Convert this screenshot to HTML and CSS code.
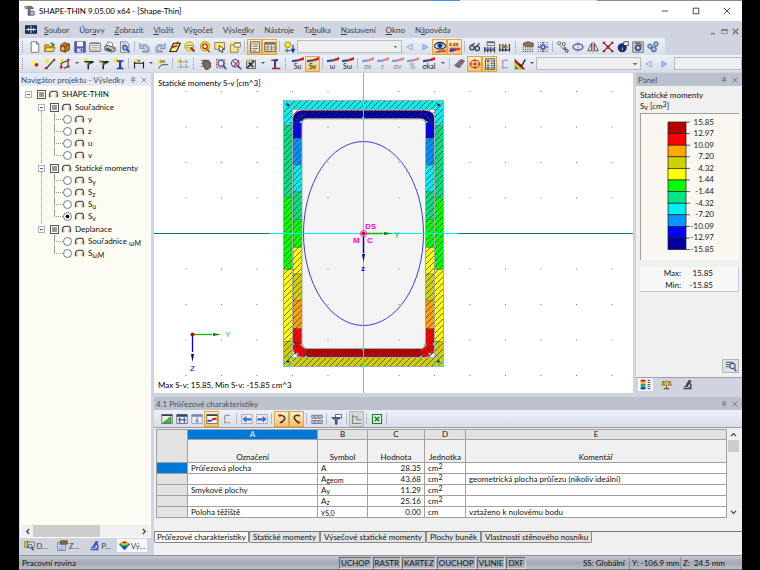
FILE: index.html
```html
<!DOCTYPE html>
<html lang="cs">
<head>
  <meta charset="UTF-8">
  <title>SHAPE-THIN 9.05.00 x64 - [Shape-Thin]</title>
  <meta name="viewport" content="width=device-width, initial-scale=1.0">
  <link rel="stylesheet" href="styles.css">
</head>

<body>
  <!-- Icon set -->
  <svg class="sprite" xmlns="http://www.w3.org/2000/svg">
    <symbol id="new" viewBox="0 0 16 16"><path d="M3 1h7l3 3v11H3z" fill="#fff" stroke="#555"/><path d="M10 1v3h3" fill="none" stroke="#555"/></symbol>
    <symbol id="open" viewBox="0 0 16 16"><path d="M1 5h5l1 2h6v7H1z" fill="#d9a520" stroke="#8a6a10"/><path d="M3 9h12l-3 5H1z" fill="#ffdf6a" stroke="#8a6a10"/><path d="M8 3c2-2 4-1 5 1l1-1v4h-4l1-1c-1-2-2-2-3-3" fill="#3a8a3a"/></symbol>
    <symbol id="box" viewBox="0 0 16 16"><path d="M2 6l5-4 7 2v8l-6 3-6-2z" fill="#b5752a" stroke="#5e3a10"/><path d="M2 6l6 2 6-4M8 8v7" fill="none" stroke="#5e3a10"/><circle cx="5" cy="10" r="2" fill="#f3c34a"/></symbol>
    <symbol id="save" viewBox="0 0 16 16"><path d="M1 1h14v14H1z" fill="#5b62b5" stroke="#34397d"/><path d="M4 1h8v6H4z" fill="#fff"/><path d="M4 10h8v5H4z" fill="#cfd4ec"/><path d="M9 11h2v3H9z" fill="#34397d"/></symbol>
    <symbol id="sheet" viewBox="0 0 16 16"><path d="M1 3h14v11H1z" fill="#f5f1e2" stroke="#555"/><path d="M3 6h10M3 9h10M3 12h10" stroke="#888"/><path d="M2 2h12v2H2z" fill="#777"/></symbol>
    <symbol id="print" viewBox="0 0 16 16"><path d="M5 1l7 2-1 5-8-2z" fill="#fff" stroke="#666"/><path d="M1 7l5-1 9 3v4l-5 2-9-3z" fill="#b9bec8" stroke="#444"/><path d="M3 10l7 3" stroke="#333" stroke-width="2"/><circle cx="13" cy="10" r="1" fill="#2a8a2a"/></symbol>
    <symbol id="preview" viewBox="0 0 16 16"><path d="M2 1h8l3 3v11H2z" fill="#e8eef8" stroke="#667"/><path d="M4 4h5M4 6h6" stroke="#889"/><circle cx="8" cy="9" r="3" fill="#9cc2ee" stroke="#234b86" stroke-width="1.5"/><path d="M10 11l4 4" stroke="#234b86" stroke-width="2"/></symbol>
    <symbol id="undo" viewBox="0 0 16 16"><path d="M1 3v7h7L5 7.500c4-2 7 0 6 5.500H5v2h8c3-8-4-13-10-9z" fill="#b4cbea" stroke="#6f7f9a"/></symbol>
    <symbol id="redo" viewBox="0 0 16 16"><path d="M15 3v7H8l3-2.500c-4-2-7 0-6 5.500h6v2H3c-3-8 4-13 10-9z" fill="#b4cbea" stroke="#6f7f9a"/></symbol>
    <symbol id="rhomb" viewBox="0 0 16 16"><path d="M6 3h9l-5 11H1z" fill="#ffef6a" stroke="#222" stroke-width="1.5"/><path d="M10 3l3-2M3 9l8-3" stroke="#b02020" stroke-width="2"/></symbol>
    <symbol id="brush" viewBox="0 0 16 16"><circle cx="7" cy="7" r="6" fill="#ffe95a" stroke="#a98d10"/><path d="M4 6h7v3H4z" fill="#fff" stroke="#777"/><path d="M9 9l5 5" stroke="#a02818" stroke-width="2.5"/></symbol>
    <symbol id="target" viewBox="0 0 16 16"><circle cx="8" cy="7" r="6" fill="#ffe11e" stroke="#9a7b00"/><circle cx="8" cy="7" r="3" fill="#fff" stroke="#b11" stroke-width="1.5"/><path d="M10 10l4 5" stroke="#9a5a18" stroke-width="2"/></symbol>
    <symbol id="pick" viewBox="0 0 16 16"><path d="M1 2h13v9H1z" fill="#ffe95a" stroke="#666"/><path d="M7 6l7 5-3 0 1 4-2 0-1-3-2 2z" fill="#fff" stroke="#222"/></symbol>
    <symbol id="folder" viewBox="0 0 16 16"><path d="M2 5h10v10H2z" fill="#ffe68a" stroke="#7a6420"/><path d="M7 2h8v6H7z" fill="#fff" stroke="#555"/><path d="M7 2h8v2H7z" fill="#c9a22a"/><path d="M1 3l2-2 2 2-2 2z" fill="#ffe11e"/></symbol>
    <symbol id="list" viewBox="0 0 16 16"><path d="M2 1h12v14H2z" fill="#f4ecd8" stroke="#444"/><path d="M5 4h7M5 7h7M5 10h7M5 13h5" stroke="#555"/><path d="M3 4h1M3 7h1M3 10h1M3 13h1" stroke="#a33"/></symbol>
    <symbol id="table" viewBox="0 0 16 16"><path d="M1 2h14v12H1z" fill="#f4ecd8" stroke="#444"/><path d="M1 2h14v3H1z" fill="#777"/><path d="M5 5v9M10 5v9M1 8h14M1 11h14" stroke="#777"/></symbol>
    <symbol id="load" viewBox="0 0 16 16"><circle cx="5" cy="5" r="4" fill="#f5e63a" stroke="#8a8010"/><path d="M1 13h8M4 10v5" stroke="#2a7a3a" stroke-width="1.5"/><path d="M12 5v8M10 11l2 4 2-4z" stroke="#1a3a9a" fill="#1a3a9a" stroke-width="1.5"/></symbol>
    <symbol id="prev" viewBox="0 0 16 16"><path d="M11 4v8L4 8z" fill="#d4e2fa" stroke="#7f9ad2"/></symbol>
    <symbol id="next" viewBox="0 0 16 16"><path d="M5 4v8l7-4z" fill="#a9c0ee" stroke="#7f9ad2"/></symbol>
    <symbol id="eye" viewBox="0 0 16 16"><path d="M0 7c4-7 12-7 16 0-4 5-12 5-16 0" fill="#e6f2ff" stroke="#1c2b66" stroke-width="1.5"/><circle cx="8" cy="6" r="3.5" fill="#2458b8"/><circle cx="8" cy="6" r="1.5" fill="#111"/><path d="M1 15l14-4v4z" fill="#e04020"/><path d="M1 15l7-2v2z" fill="#2040e0"/></symbol>
    <symbol id="values" viewBox="0 0 16 16"><text x="0" y="7" font-size="7" font-weight="bold" fill="#5a2a00">x.xx</text><path d="M1 14V9l14 0v3z" fill="#e04020"/><path d="M1 15v-4l8 0v2z" fill="#2040e0"/></symbol>
    <symbol id="glasses" viewBox="0 0 16 16"><path d="M2 6l6-3M9 8l5-5" stroke="#445" stroke-width="1.5"/><circle cx="4" cy="9" r="3" fill="#b9cbe8" stroke="#334" stroke-width="1.5"/><circle cx="11" cy="10" r="3" fill="#b9cbe8" stroke="#334" stroke-width="1.5"/></symbol>
    <symbol id="ruler" viewBox="0 0 16 16"><path d="M4 1h10v5H4z" fill="#f3f3f3" stroke="#555"/><path d="M4 1h10v2H4z" fill="#666"/><path d="M1 8v7M5 8v7M9 8v7M14 8v7M1 12h13" stroke="#223" stroke-width="1.5"/><path d="M2 9h12v2H2z" fill="#6b86b8"/></symbol>
    <symbol id="ruler2" viewBox="0 0 16 16"><path d="M1 4v10M5 4v10M9 4v10M14 4v10M1 12h13" stroke="#223" stroke-width="1.5"/><path d="M1 6h13v3H1z" fill="#d9b22a"/><path d="M5 6h5v3H5z" fill="#3a6ac0"/></symbol>
    <symbol id="gridhand" viewBox="0 0 16 16"><path d="M1 8h14M1 11h14M1 14h14" stroke="#333" stroke-width="1.5" stroke-dasharray="1.5 1.5"/><path d="M2 3l6-2 7 2v4H8L2 6z" fill="#9a7458" stroke="#4d3524"/></symbol>
    <symbol id="gridsnap" viewBox="0 0 16 16"><path d="M1 2h14M1 5h14M1 8h14M1 11h14M1 14h14" stroke="#555" stroke-dasharray="1.5 1.5"/><path d="M8 1v14M1 8h14M5 5l6 6M11 5l-6 6" stroke="#2038c0" stroke-width="1.3"/><circle cx="8" cy="8" r="2" fill="#fff" stroke="#2038c0"/></symbol>
    <symbol id="link" viewBox="0 0 16 16"><circle cx="3" cy="3" r="2" fill="#fff" stroke="#333"/><circle cx="9" cy="4" r="2" fill="#fff" stroke="#333"/><circle cx="13" cy="13" r="2" fill="#b9bec8" stroke="#333"/><path d="M4 6l5 5M9 7l3 4M8 11h3V8" stroke="#333" fill="none"/></symbol>
    <symbol id="rotate" viewBox="0 0 16 16"><ellipse cx="8" cy="8" rx="6.5" ry="4" fill="none" stroke="#4a70b8" stroke-width="2"/><path d="M8 1v14" stroke="#c24a4a" stroke-dasharray="2 1"/></symbol>
    <symbol id="mirror" viewBox="0 0 16 16"><path d="M6 3v10H1zM10 3v10h5z" fill="#e8ebf2" stroke="#333"/><path d="M8 1v14" stroke="#c22"/></symbol>
    <symbol id="cross" viewBox="0 0 16 16"><path d="M2 2l12 12M14 2L2 14" stroke="#444" stroke-width="1.5"/><path d="M1 1h3v3H1zM12 1h3v3h-3zM1 12h3v3H1zM12 12h3v3h-3zM6 6h4v4H6z" fill="#d01818"/></symbol>
    <symbol id="info" viewBox="0 0 16 16"><circle cx="7" cy="9" r="6" fill="#1c2a6e"/><path d="M6 8h2v5H6zM9 1h6v5H9z" fill="#fff" stroke="#223"/></symbol>
    <symbol id="photo" viewBox="0 0 16 16"><path d="M1 1h14v14H1z" fill="#cdd3de" stroke="#555"/><circle cx="8" cy="9" r="4" fill="#4a7ac0" stroke="#223"/><path d="M4 3h6l3 3" stroke="#a0522d" stroke-width="2" fill="none"/><circle cx="8" cy="9" r="1.5" fill="#fff"/></symbol>
    <symbol id="gears" viewBox="0 0 16 16"><g fill="#7f9fd0" stroke="#385688"><circle cx="4" cy="7" r="3"/><circle cx="12" cy="4" r="3"/><circle cx="9" cy="11" r="3.5"/></g><g fill="#fff"><circle cx="4" cy="7" r="1"/><circle cx="12" cy="4" r="1"/><circle cx="9" cy="11" r="1"/></g></symbol>
    <symbol id="node" viewBox="0 0 16 16"><circle cx="6" cy="6" r="3.5" fill="#fff27a"/><circle cx="10" cy="9" r="2.5" fill="#d22020"/></symbol>
    <symbol id="line" viewBox="0 0 16 16"><circle cx="4" cy="4" r="3" fill="#f5e63a"/><path d="M3 14L13 3" stroke="#333" stroke-width="1.5"/><path d="M1 12h4v3H1zM12 1h3v3h-3z" fill="#d22020"/></symbol>
    <symbol id="poly" viewBox="0 0 16 16"><circle cx="4" cy="4" r="3" fill="#f5e63a"/><path d="M3 13V7l9-4v8l-5 3" fill="none" stroke="#333" stroke-width="1.5"/><path d="M1 11h4v3H1zM11 1h3v3h-3zM11 10h3v3h-3z" fill="#d22020"/></symbol>
    <symbol id="elem" viewBox="0 0 16 16"><circle cx="4" cy="3" r="3" fill="#f5e63a"/><path d="M2 5h12l-7 3v7" fill="none" stroke="#222" stroke-width="2"/><path d="M7 6l4 1-4 3z" fill="#2b7a3a"/></symbol>
    <symbol id="elem2" viewBox="0 0 16 16"><path d="M2 5h12l-7 3v7" fill="none" stroke="#222" stroke-width="2"/><path d="M7 7l5-1-5 5z" fill="#2b7a3a"/><circle cx="3" cy="4" r="2" fill="#f5a53a"/></symbol>
    <symbol id="ibeam" viewBox="0 0 16 16"><circle cx="4" cy="3" r="3" fill="#f5e63a"/><path d="M5 4h9M5 14h9" stroke="#1c3a9a" stroke-width="2"/><path d="M9.5 4v10" stroke="#1c3a9a" stroke-width="3"/></symbol>
    <symbol id="ibeam2" viewBox="0 0 16 16"><path d="M3 3h9M4 14h11" stroke="#c22020" stroke-width="2"/><path d="M12 3H8v11" stroke="#1c3a9a" stroke-width="2.5" fill="none"/></symbol>
    <symbol id="dim" viewBox="0 0 16 16"><circle cx="5" cy="4" r="3" fill="#f5e63a"/><path d="M2 5v9M14 5v9M2 7h12" stroke="#222" stroke-width="1.5"/><path d="M6 2l4 4M10 2L6 6" stroke="#555"/></symbol>
    <symbol id="xxx" viewBox="0 0 16 16"><circle cx="4" cy="5" r="3" fill="#f5e63a"/><text x="4" y="7" font-size="7" fill="#333">xx</text><path d="M2 14l4-5h9" stroke="#444" fill="none" stroke-width="1.3"/></symbol>
    <symbol id="axes" viewBox="0 0 16 16"><circle cx="4" cy="4" r="3" fill="#f5e63a"/><path d="M5 2v12M12 2v12M1 5h14M1 12h14" stroke="#667" stroke-dasharray="2 1"/></symbol>
    <symbol id="hand" viewBox="0 0 16 16"><path d="M1 3h12M1 7h4M1 11h4" stroke="#555"/><path d="M4 4l4-1 6 3v6l-3 3H7L4 9z" fill="#7c6b5c" stroke="#332a22"/></symbol>
    <symbol id="zoom" viewBox="0 0 16 16"><path d="M2 2h11v11H2z" fill="none" stroke="#c22" stroke-dasharray="2 1"/><circle cx="8" cy="7" r="4" fill="#e0ecfa" stroke="#34508c" stroke-width="1.5"/><path d="M11 10l4 5" stroke="#34508c" stroke-width="2"/></symbol>
    <symbol id="zoomx" viewBox="0 0 16 16"><circle cx="7" cy="7" r="5" fill="#e0ecfa" stroke="#34508c" stroke-width="1.5"/><path d="M10 10l5 5" stroke="#34508c" stroke-width="2"/><path d="M4 4l8 9M12 3L4 12" stroke="#d02020" stroke-width="1.5"/></symbol>
    <symbol id="view" viewBox="0 0 16 16"><path d="M2 3h12v11H2z" fill="#cfd3d9" stroke="#444"/><path d="M3 13L12 4M5 6l6 6" stroke="#222" stroke-width="2"/><path d="M2 2h5v3H2z" fill="#e5d43a"/></symbol>
    <symbol id="wedge" viewBox="0 0 16 8"><path d="M0 7V4L8 3v3z" fill="#3a4a9a"/><path d="M8 6V3l8-3v4z" fill="#d02a1c"/></symbol>
    <symbol id="plate" viewBox="0 0 16 16"><path d="M1 10l8-8 5 2-7 9z" fill="#5a86c4" stroke="#444"/><path d="M3 12l9-9" stroke="#d04030" stroke-width="1.5"/></symbol>
    <symbol id="locate" viewBox="0 0 16 16"><ellipse cx="8" cy="8" rx="6" ry="5" fill="none" stroke="#b03010" stroke-width="1.5"/><path d="M8 1v14M0 8h16" stroke="#b03010"/><circle cx="8" cy="8" r="1.5" fill="#b03010"/></symbol>
    <symbol id="legend" viewBox="0 0 16 16"><path d="M2 1h12v14H2z" fill="#d7dbe4" stroke="#334"/><path d="M4 3h3v2H4z" fill="#c00"/><path d="M4 6h3v2H4z" fill="#e8c000"/><path d="M4 9h3v2H4z" fill="#0a0"/><path d="M4 12h3v2H4z" fill="#06c"/><path d="M9 4h4M9 7h4M9 10h4M9 13h4" stroke="#333"/></symbol>
    <symbol id="colors" viewBox="0 0 16 16"><path d="M1 1h7v3H1z" fill="#d01010"/><path d="M1 4h7v3H1z" fill="#f0c000"/><path d="M1 7h7v3H1z" fill="#00c020"/><path d="M1 10h7v2H1z" fill="#00b8e0"/><path d="M1 12h7v3H1z" fill="#1020c0"/><path d="M11 2h4M11 5h4M11 8h4M11 11h4M11 14h4" stroke="#555" stroke-width="1.5"/></symbol>
    <symbol id="bracket" viewBox="0 0 16 16"><path d="M12 3H5v10h7" fill="none" stroke="#888" stroke-width="1.5" stroke-dasharray="6 1"/></symbol>
    <symbol id="rainbow" viewBox="0 0 16 16"><path d="M1 1v14h14z" fill="#1a9a30"/><path d="M1 1l14 14H11L1 6z" fill="#d01818"/><path d="M1 6l10 9H7L1 10z" fill="#f3d21a"/><path d="M7 8l3 3 5-9" fill="none" stroke="#222" stroke-width="2"/></symbol>
    <symbol id="section" viewBox="0 0 16 12"><path d="M2 11V6Q3 2 6 2h6q2 1 2 4v5" fill="none" stroke="#555" stroke-width="2"/><path d="M4 11V7M12 11V6" stroke="#c83a3a"/></symbol>
    <symbol id="tri" viewBox="0 0 16 16"><path d="M1 2h14v12H1z" fill="#e8f2e4" stroke="#555"/><path d="M1 2h14v2H1z" fill="#345"/><path d="M3 13L13 5v8z" fill="#4ac04a" stroke="#1d7a1d"/></symbol>
    <symbol id="sort" viewBox="0 0 16 16"><path d="M1 2h14v12H1z" fill="#e8edf6" stroke="#555"/><path d="M1 2h14v3H1z" fill="#345"/><path d="M5 6v7M11 6v7M3 9h10" stroke="#2848a8" stroke-width="1.5"/></symbol>
    <symbol id="down" viewBox="0 0 16 16"><path d="M1 2h14v12H1z" fill="#e8edf6" stroke="#8a93a8"/><path d="M1 2h14v3H1z" fill="#7886a8"/><path d="M7 6h2v4h2l-3 4-3-4h2z" fill="#7c98cc"/></symbol>
    <symbol id="tablewedge" viewBox="0 0 16 16"><path d="M1 2h14v12H1z" fill="#fff" stroke="#555"/><path d="M1 2h14v2H1z" fill="#345"/><path d="M2 12V9h6v2z" fill="#2040c0"/><path d="M8 10V7l6-1v3z" fill="#d02a1c"/></symbol>
    <symbol id="left" viewBox="0 0 16 16"><path d="M1 2h14v12H1z" fill="#e8edf6" stroke="#777" stroke-dasharray="2 1"/><path d="M2 8l5-4v3h7v3H7v3z" fill="#3f6cc8"/></symbol>
    <symbol id="right" viewBox="0 0 16 16"><path d="M1 2h14v12H1z" fill="#e8edf6" stroke="#777" stroke-dasharray="2 1"/><path d="M14 8L9 4v3H2v3h7v3z" fill="#3f6cc8"/></symbol>
    <symbol id="turnr" viewBox="0 0 16 16"><path d="M5 3c6 0 8 3 6 6s-4 4-6 4" fill="none" stroke="#433" stroke-width="2"/><path d="M6 1v5L2 3z" fill="#c22"/></symbol>
    <symbol id="turnl" viewBox="0 0 16 16"><path d="M12 4C6 1 3 5 5 8s3 4 5 5" fill="none" stroke="#433" stroke-width="2"/><path d="M9 15v-5l4 3z" fill="#c22"/></symbol>
    <symbol id="rows" viewBox="0 0 16 16"><path d="M1 3h14v4H1zM1 10h14v4H1z" fill="#b9bfe0" stroke="#667"/><path d="M5 3v4M10 3v4M5 10v4M10 10v4" stroke="#667"/></symbol>
    <symbol id="filter" viewBox="0 0 16 16"><path d="M6 2h8v5H6z" fill="#fff" stroke="#345"/><path d="M1 6h11L8 10v5H6v-5z" fill="#4a72b8" stroke="#234"/></symbol>
    <symbol id="chart" viewBox="0 0 16 16"><path d="M2 2v12h12M2 5h6v4h6" fill="none" stroke="#888" stroke-width="1.5"/></symbol>
    <symbol id="excel" viewBox="0 0 16 16"><path d="M2 2h12v12H2z" fill="#e2f3e2" stroke="#1d7a2d" stroke-width="1.5"/><path d="M5 5l6 6M11 5l-6 6" stroke="#1d7a2d" stroke-width="2"/></symbol>
    <symbol id="data" viewBox="0 0 16 16"><path d="M1 2h6v9H1z" fill="#f0c030" stroke="#86661a"/><path d="M5 3h10v8H5z" fill="#dde7f6" stroke="#446"/><circle cx="9" cy="9" r="3" fill="#a8ccf2" stroke="#245"/><path d="M11 11l3 4" stroke="#245" stroke-width="2"/></symbol>
    <symbol id="display" viewBox="0 0 16 16"><path d="M1 4h11v11H1z" fill="#eef2fa" stroke="#3a4a78"/><path d="M3 7h7M3 10h7M3 13h7" stroke="#3a5ab0"/><path d="M5 1h10v5H5z" fill="#8c6a4c" stroke="#443"/></symbol>
    <symbol id="scope" viewBox="0 0 16 16"><path d="M10 1l4 2-6 8-3-2z" fill="#444"/><path d="M11 6c4 3 2 7-1 7M2 14h12M3 11h6" stroke="#444" stroke-width="2" fill="none"/></symbol>
    <symbol id="scopeblue" viewBox="0 0 16 16"><path d="M10 1l4 2-6 8-3-2z" fill="#3a58c8"/><path d="M11 6c4 3 2 7-1 7M2 14h12M3 11h6" stroke="#3a58c8" stroke-width="2" fill="none"/></symbol>
    <symbol id="result" viewBox="0 0 16 16"><path d="M0 6q8-7 16 0l-8 9z" fill="#1a40d0"/><path d="M1 5q7-6 14 0l-3 4H4z" fill="#20c040"/><path d="M2 4q6-4 12 0l-3 3H5z" fill="#f0e020"/><path d="M4 3q4-2 8 0l-2 2H6z" fill="#e02020"/></symbol>
    <symbol id="scales" viewBox="0 0 16 16"><path d="M8 2v11M4 14h8M2 4h12" stroke="#6a5a20" stroke-width="1.5"/><path d="M1 9l2-5 3 5zM10 9l3-5 2 5z" fill="#e2c040" stroke="#6a5a20"/><ellipse cx="8" cy="6" rx="3" ry="3" fill="#d8b83a"/></symbol>
    <symbol id="search" viewBox="0 0 16 16"><path d="M1 3h10M1 6h6M1 9h5" stroke="#556" stroke-width="1.5"/><circle cx="10" cy="8" r="3.5" fill="#dce6f5" stroke="#445a90" stroke-width="1.5"/><path d="M12 11l3 4" stroke="#445a90" stroke-width="2"/></symbol>
    <symbol id="pin" viewBox="0 0 10 10"><path d="M3 1h4v5M3 1v5M6 1v5M1 6h8M5 6v4" fill="none" stroke="#667"/></symbol>
    <symbol id="close" viewBox="0 0 10 10"><path d="M1 1l8 8M9 1L1 9" stroke="#556"/></symbol>
  </svg>

  <div class="app">
    <header class="titlebar">
      <svg class="logo" viewBox="0 0 16 16"><path d="M1 2h10l3 3H9v10H6V5H2z" fill="#6f7a8c" stroke="#39424f"/><circle cx="12" cy="12" r="3.5" fill="#a7b7d6" stroke="#445"/><path d="M1 1l4 1-2 4z" fill="#e0b030"/></svg>
      <h1>SHAPE-THIN 9.05.00 x64 - [Shape-Thin]</h1>
      <div class="window-buttons">
        <button aria-label="Minimalizovat"><svg viewBox="0 0 10 10"><path d="M1 5h8" stroke="#222"/></svg></button>
        <button aria-label="Maximalizovat"><svg viewBox="0 0 10 10"><path d="M1.5 1.5h7v7h-7z" fill="none" stroke="#222"/></svg></button>
        <button aria-label="Zavřít"><svg viewBox="0 0 10 10"><path d="M1 1l8 8M9 1L1 9" stroke="#222"/></svg></button>
      </div>
    </header>

    <nav class="menubar">
      <svg class="menu-logo" viewBox="0 0 14 10"><path d="M0 0h14v10H0z" fill="#1e2a5c"/><path d="M1 5h12M7 1v8M4 3v4M10 3v4" stroke="#fff"/></svg>
      <a href="#"><u>S</u>oubor</a>
      <a href="#">Úpr<u>a</u>vy</a>
      <a href="#"><u>Z</u>obrazit</a>
      <a href="#"><u>V</u>ložit</a>
      <a href="#">Vý<u>p</u>očet</a>
      <a href="#">Výsle<u>d</u>ky</a>
      <a href="#">Nástro<u>j</u>e</a>
      <a href="#">Ta<u>b</u>ulka</a>
      <a href="#"><u>N</u>astavení</a>
      <a href="#"><u>O</u>kno</a>
      <a href="#">N<u>á</u>pověda</a>
      <div class="mdi-buttons">
        <button aria-label="Minimalizovat okno"><svg viewBox="0 0 10 10"><path d="M1 8h6" stroke="#777" stroke-width="2"/></svg></button>
        <button aria-label="Obnovit okno"><svg viewBox="0 0 10 10"><path d="M1 2h8v6H1z" fill="none" stroke="#777"/><path d="M1 3h8" stroke="#777" stroke-width="2"/></svg></button>
        <button aria-label="Zavřít okno"><svg viewBox="0 0 10 10"><path d="M1 1l8 8M9 1L1 9" stroke="#777" stroke-width="2"/></svg></button>
      </div>
    </nav>

    <div class="toolbars">
      <div class="toolbar short">
        <i class="grip"></i>
        <button class="tool"><svg><use href="#new"/></svg></button>
        <button class="tool"><svg><use href="#open"/></svg></button>
        <button class="tool"><svg><use href="#box"/></svg></button>
        <button class="tool"><svg><use href="#save"/></svg></button>
        <button class="tool"><svg><use href="#sheet"/></svg></button>
        <button class="tool"><svg><use href="#print"/></svg></button>
        <button class="tool"><svg><use href="#preview"/></svg></button>
        <i class="sep"></i>
        <button class="tool"><svg><use href="#undo"/></svg></button>
        <button class="tool"><svg><use href="#redo"/></svg></button>
        <button class="tool"><svg><use href="#rhomb"/></svg></button>
        <button class="tool"><svg><use href="#brush"/></svg></button>
        <button class="tool"><svg><use href="#target"/></svg></button>
        <button class="tool"><svg><use href="#pick"/></svg></button>
        <button class="tool"><svg><use href="#folder"/></svg></button>
        <i class="sep"></i>
        <button class="tool on"><svg><use href="#list"/></svg></button>
        <button class="tool on"><svg><use href="#table"/></svg></button>
        <i class="sep"></i>
        <button class="tool"><svg><use href="#load"/></svg></button>
        <select class="combo" aria-label="Zatěžovací stav"><option></option></select>
        <button class="tool"><svg><use href="#prev"/></svg></button>
        <button class="tool"><svg><use href="#next"/></svg></button>
        <button class="tool on"><svg><use href="#eye"/></svg></button>
        <button class="tool on"><svg><use href="#values"/></svg></button>
        <i class="sep"></i>
        <button class="tool"><svg><use href="#glasses"/></svg></button>
        <button class="tool"><svg><use href="#ruler"/></svg></button>
        <button class="tool"><svg><use href="#ruler2"/></svg></button>
        <i class="grip"></i>
        <button class="tool"><svg><use href="#gridhand"/></svg></button>
        <button class="tool"><svg><use href="#gridsnap"/></svg></button>
        <i class="sep"></i>
        <button class="tool"><svg><use href="#link"/></svg></button>
        <button class="tool"><svg><use href="#rotate"/></svg></button>
        <button class="tool"><svg><use href="#mirror"/></svg></button>
        <button class="tool"><svg><use href="#cross"/></svg></button>
        <button class="tool"><svg><use href="#info"/></svg></button>
        <button class="tool"><svg><use href="#photo"/></svg></button>
        <button class="tool"><svg><use href="#gears"/></svg></button>
      </div>

      <div class="toolbar">
        <i class="grip"></i>
        <button class="tool"><svg><use href="#node"/></svg></button>
        <button class="tool"><svg><use href="#line"/></svg></button>
        <button class="tool"><svg><use href="#poly"/></svg></button>
        <button class="drop" aria-label="Další linie"></button>
        <button class="tool"><svg><use href="#elem"/></svg></button>
        <button class="tool"><svg><use href="#elem2"/></svg></button>
        <button class="tool"><svg><use href="#ibeam"/></svg></button>
        <i class="sep"></i>
        <button class="tool"><svg><use href="#dim"/></svg></button>
        <button class="drop" aria-label="Další kóty"></button>
        <button class="tool"><svg><use href="#xxx"/></svg></button>
        <i class="sep"></i>
        <button class="tool"><svg><use href="#axes"/></svg></button>
        <i class="grip"></i>
        <button class="tool"><svg><use href="#hand"/></svg></button>
        <button class="tool"><svg><use href="#zoom"/></svg></button>
        <button class="tool"><svg><use href="#zoomx"/></svg></button>
        <button class="tool"><svg><use href="#view"/></svg></button>
        <button class="drop" aria-label="Další pohledy"></button>
        <button class="tool"><svg><use href="#ibeam2"/></svg></button>
        <i class="grip"></i>
        <button class="tool value"><svg><use href="#wedge"/></svg>Su</button>
        <button class="tool value on"><svg><use href="#wedge"/></svg>Sv</button>
        <i class="sep"></i>
        <button class="tool value"><svg><use href="#wedge"/></svg>ω</button>
        <button class="tool value"><svg><use href="#wedge"/></svg>Sω</button>
        <i class="sep"></i>
        <button class="tool value" disabled><svg><use href="#wedge"/></svg>σx</button>
        <button class="tool value" disabled><svg><use href="#wedge"/></svg>τ</button>
        <button class="tool value" disabled><svg><use href="#wedge"/></svg>σv</button>
        <button class="tool value" disabled><svg><use href="#wedge"/></svg>%</button>
        <button class="tool value wide"><svg><use href="#wedge"/></svg>σkal</button>
        <button class="drop" aria-label="Další napětí"></button>
        <i class="sep"></i>
        <button class="tool"><svg><use href="#plate"/></svg></button>
        <button class="tool on"><svg><use href="#locate"/></svg></button>
        <button class="tool on"><svg><use href="#legend"/></svg></button>
        <button class="tool"><svg><use href="#bracket"/></svg></button>
        <button class="tool"><svg><use href="#rainbow"/></svg></button>
        <button class="drop" aria-label="Další barvy"></button>
        <select class="combo" aria-label="Viditelnost"><option></option></select>
        <button class="tool"><svg><use href="#prev"/></svg></button>
        <button class="tool"><svg><use href="#next"/></svg></button>
        <select class="combo last" aria-label="Řez"><option></option></select>
      </div>
    </div>

    <main class="workspace">
      <!-- Project navigator -->
      <aside class="navigator">
        <div class="pane-head light">
          <h2>Navigátor projektu - Výsledky</h2>
          <button><svg><use href="#pin"/></svg></button>
          <button><svg><use href="#close"/></svg></button>
        </div>
        <div class="tree-box">
          <ul class="tree">
            <li class="group">
              <label><i class="expander"></i><input type="checkbox" class="mixed"><svg><use href="#section"/></svg>SHAPE-THIN</label>
              <ul>
                <li class="group">
                  <label><i class="expander"></i><input type="checkbox" class="mixed"><svg><use href="#section"/></svg>Souřadnice</label>
                  <ul>
                    <li><label><input type="radio" name="result"><svg><use href="#section"/></svg>y</label></li>
                    <li><label><input type="radio" name="result"><svg><use href="#section"/></svg>z</label></li>
                    <li><label><input type="radio" name="result"><svg><use href="#section"/></svg>u</label></li>
                    <li><label><input type="radio" name="result"><svg><use href="#section"/></svg>v</label></li>
                  </ul>
                </li>
                <li class="group">
                  <label><i class="expander"></i><input type="checkbox" class="mixed"><svg><use href="#section"/></svg>Statické momenty</label>
                  <ul>
                    <li><label><input type="radio" name="result"><svg><use href="#section"/></svg>S<sub>y</sub></label></li>
                    <li><label><input type="radio" name="result"><svg><use href="#section"/></svg>S<sub>z</sub></label></li>
                    <li><label><input type="radio" name="result"><svg><use href="#section"/></svg>S<sub>u</sub></label></li>
                    <li><label><input type="radio" name="result" checked><svg><use href="#section"/></svg>S<sub>v</sub></label></li>
                  </ul>
                </li>
                <li class="group">
                  <label><i class="expander"></i><input type="checkbox" class="mixed"><svg><use href="#section"/></svg>Deplanace</label>
                  <ul>
                    <li><label><input type="radio" name="result"><svg><use href="#section"/></svg>Souřadnice <sub>ωM</sub></label></li>
                    <li><label><input type="radio" name="result"><svg><use href="#section"/></svg>S<sub>ωM</sub></label></li>
                  </ul>
                </li>
              </ul>
            </li>
          </ul>
          <div class="hscroll">
            <button aria-label="Vlevo"><svg viewBox="0 0 6 8"><path d="M5 1L2 4l3 3" fill="none" stroke="#444" stroke-width="1.5"/></svg></button>
            <div class="track"><div class="thumb"></div></div>
            <button aria-label="Vpravo"><svg viewBox="0 0 6 8"><path d="M1 1l3 3-3 3" fill="none" stroke="#444" stroke-width="1.5"/></svg></button>
          </div>
        </div>
        <div class="nav-tabs">
          <button><svg><use href="#data"/></svg>D...</button>
          <button><svg><use href="#display"/></svg>Z...</button>
          <button><svg><use href="#scopeblue"/></svg>P...</button>
          <button class="active"><svg><use href="#result"/></svg>Vý...</button>
        </div>
      </aside>

      <div class="right">
        <div class="upper">
          <!-- Cross-section drawing -->
          <div class="canvas">
            <svg viewBox="154 73 479 320" preserveAspectRatio="xMidYMid meet">
              <defs>
                <pattern id="dots" x="292" y="91" width="35.5" height="35.5" patternUnits="userSpaceOnUse"><path d="M0 0h1v1H0z" fill="#777"/></pattern>
                <pattern id="hatch" width="6" height="6" patternUnits="userSpaceOnUse"><path d="M-1 7L7-1" stroke="#303030" stroke-width=".7"/></pattern>
              </defs>
              <path d="M283 100h160v266H283z" fill="#fff"/>
              <!-- outer walls -->
              <g stroke="#7a5a4a" stroke-width=".5">
                <path d="M283.5 100.5h160v25h-9V109.5h-142v16h-9z" fill="#00f0f0"/>
                <path d="M283.5 125.5h9v72h-9zM434.5 125.5h9v72h-9z" fill="#00e080"/>
                <path d="M283.5 197.5h9v72h-9zM434.5 197.5h9v72h-9z" fill="#00ff00"/>
                <path d="M283.5 269.5h9v72h-9zM434.5 269.5h9v72h-9z" fill="#ffff00"/>
                <path d="M283.5 341.5h9v16h142v-16h9v25h-160z" fill="#d0d000"/>
                <!-- inner walls -->
                <path d="M302 110.500h122.500c7 0 10 4 10 9v3h-9c0-3-2-4-4-4H306c-3 0-4 2-4 4h-9v-3c0-5 4-9 9-9z" fill="#0000a0"/>
                <path d="M293 122h9v16.500h-9zM425.500 122h9v16.500h-9z" fill="#0000ff"/>
                <path d="M293 138.500h9V165h-9zM425.500 138.500h9V165h-9z" fill="#0090ff"/>
                <path d="M293 165h9v27h-9zM425.500 165h9v27h-9z" fill="#00f0f0"/>
                <path d="M293 192h9v27.500h-9zM425.500 192h9v27.500h-9z" fill="#00e080"/>
                <path d="M293 219.500h9v28h-9zM425.500 219.500h9v28h-9z" fill="#00ff00"/>
                <path d="M293 247.500h9V274h-9zM425.500 247.500h9V274h-9z" fill="#ffff00"/>
                <path d="M293 274h9v27h-9zM425.500 274h9v27h-9z" fill="#d0d000"/>
                <path d="M293 301h9v27.500h-9zM425.500 301h9v27.500h-9z" fill="#ffa000"/>
                <path d="M293 328.500h9V344c0 3 2 4.500 4 4.500v8.500h-3c-6 0-10-4-10-9zM434.500 328.500h-9V344c0 3-2 4.500-4 4.500v8.500h3c6 0 10-4 10-9z" fill="#ff0000"/>
                <path d="M306 348.500h115.500v8.500H306z" fill="#b80000"/>
              </g>
              <path d="M283 100h160v266H283zM306 119c-3 0-4 2-4 5v220c0 3 2 4.500 4 4.500h115.500c3 0 4-2 4-4.500V124c0-3-1-5-4-5z" fill="url(#hatch)" fill-rule="evenodd"/>
              <rect x="302" y="119" width="123.5" height="229.5" rx="5" fill="#f4f4f4" stroke="#a8a8a8"/>
              <path d="M283.5 100.5h160v266h-160zM292.5 109.5h142v248h-142z" fill="none" stroke="#a8a8a8"/>
              <path d="M154 73h479v320H154z" fill="url(#dots)"/>
              <ellipse cx="363.5" cy="233.5" rx="60" ry="92" fill="none" stroke="#3c3cf0"/>
              <path d="M154 233.500h479" stroke="#007878"/>
              <path d="M270 233.500h187M363.500 73v320" stroke="#00f0ff"/>
              <!-- corner stress points -->
              <g fill="none" stroke-width="3" stroke-dasharray="2 1.5">
                <path d="M296 124q1-9 10-10M431 124q-1-9-10-10" stroke="#0020d0"/>
                <path d="M296 342q1 9 10 11M431 342q-1 9-10 11" stroke="#c00000"/>
              </g>
              <g fill="#800000"><circle cx="288" cy="105" r="1.3"/><circle cx="438.5" cy="105" r="1.3"/><circle cx="288" cy="361.5" r="1.3"/><circle cx="438.5" cy="361.5" r="1.3"/><circle cx="297" cy="122" r="1"/><circle cx="300" cy="117" r="1"/><circle cx="306" cy="114" r="1"/><circle cx="421" cy="114" r="1"/><circle cx="427" cy="117" r="1"/><circle cx="430" cy="122" r="1"/></g>
              <g fill="#20e8f0"><circle cx="284" cy="105" r="1.3"/><circle cx="288" cy="101" r="1.3"/><circle cx="443" cy="105" r="1.3"/><circle cx="438" cy="101" r="1.3"/><circle cx="284" cy="362" r="1.3"/><circle cx="288" cy="366" r="1.3"/><circle cx="288" cy="357" r="1.3"/><circle cx="292" cy="362" r="1.3"/><circle cx="443" cy="362" r="1.3"/><circle cx="438" cy="366" r="1.3"/><circle cx="438" cy="357" r="1.3"/><circle cx="434" cy="362" r="1.3"/><circle cx="301" cy="122" r="1.3"/><circle cx="426" cy="122" r="1.3"/><circle cx="293" cy="344" r="1.3"/><circle cx="302" cy="345" r="1.3"/><circle cx="297" cy="354" r="1.3"/><circle cx="434" cy="344" r="1.3"/><circle cx="425" cy="345" r="1.3"/><circle cx="430" cy="354" r="1.3"/><circle cx="306" cy="357" r="1.3"/><circle cx="421" cy="357" r="1.3"/><circle cx="363" cy="101" r="1.3"/><circle cx="363" cy="118" r="1.3"/><circle cx="363" cy="349" r="1.3"/><circle cx="363" cy="366" r="1.3"/></g>
              <!-- centroid axes -->
              <path d="M366 233.500h17" stroke="#00c000" stroke-width="1.5"/><path d="M384 232l8 1.500-8 1.500z" fill="#008000"/>
              <path d="M363.500 236v17" stroke="#0000c0" stroke-width="1.5"/><path d="M362 254h3l-1.500 8z" fill="#000090"/>
              <circle cx="363.5" cy="233.5" r="3" fill="none" stroke="#ff00c0"/><circle cx="363.5" cy="233.5" r="1.8" fill="#d00000"/>
              <text class="axis green" x="395" y="236">y</text>
              <text class="axis blue bold" x="361" y="271">z</text>
              <text class="axis pink" x="365" y="229">DS</text>
              <text class="axis pink" x="353" y="243">M</text>
              <text class="axis pink" x="367" y="243">C</text>
              <!-- global axes -->
              <path d="M193 334.500h19" stroke="#00c000" stroke-width="1.3"/><path d="M213 333l8 1.500-8 1.500z" fill="#008000"/>
              <path d="M192.500 335v17" stroke="#0000f0" stroke-width="1.3"/><path d="M191 354h3l-1.500 8z" fill="#000090"/>
              <circle cx="192.5" cy="334.5" r="2" fill="#d00000"/>
              <text class="axis green" x="225" y="337">Y</text>
              <text class="axis blue" x="190" y="371">Z</text>
              <text class="note" x="158" y="86">Statické momenty S-v [cm^3]</text>
              <text class="note" x="158" y="388">Max S-v: 15.85, Min S-v: -15.85 cm^3</text>
            </svg>
          </div>

          <!-- Control panel -->
          <aside class="panel">
            <div class="pane-head">
              <h2>Panel</h2>
              <button><svg><use href="#pin"/></svg></button>
              <button><svg><use href="#close"/></svg></button>
            </div>
            <div class="panel-body">
              <p>Statické momenty</p>
              <p>S<sub>v</sub> [cm<sup>3</sup>]</p>
              <div class="scale">
                <svg viewBox="0 0 98 146">
                  <g stroke="#222" stroke-width=".7">
                    <rect x="27" y="8" width="18" height="11.6" fill="#b80000"/>
                    <rect x="27" y="19.6" width="18" height="11.6" fill="#ff0000"/>
                    <rect x="27" y="31.2" width="18" height="11.6" fill="#ffa800"/>
                    <rect x="27" y="42.8" width="18" height="11.6" fill="#d0d000"/>
                    <rect x="27" y="54.4" width="18" height="11.6" fill="#ffff00"/>
                    <rect x="27" y="66" width="18" height="11.6" fill="#00ff00"/>
                    <rect x="27" y="77.6" width="18" height="11.6" fill="#00e688"/>
                    <rect x="27" y="89.2" width="18" height="11.6" fill="#00f0f0"/>
                    <rect x="27" y="100.8" width="18" height="11.6" fill="#0098ff"/>
                    <rect x="27" y="112.4" width="18" height="11.6" fill="#0000ff"/>
                    <rect x="27" y="124" width="18" height="11.6" fill="#0000a0"/>
                    <path d="M45 8h4M45 19.600h4M45 31.200h4M45 42.800h4M45 54.400h4M45 66h4M45 77.600h4M45 89.200h4M45 100.800h4M45 112.400h4M45 124h4M45 135.600h4"/>
                  </g>
                  <g class="scale-values">
                    <text x="73" y="11">15.85</text>
                    <text x="73" y="22">12.97</text>
                    <text x="73" y="34">10.09</text>
                    <text x="73" y="45">7.20</text>
                    <text x="73" y="57">4.32</text>
                    <text x="73" y="68">1.44</text>
                    <text x="73" y="80">-1.44</text>
                    <text x="73" y="92">-4.32</text>
                    <text x="73" y="103">-7.20</text>
                    <text x="73" y="115">-10.09</text>
                    <text x="73" y="126">-12.97</text>
                    <text x="73" y="138">-15.85</text>
                  </g>
                </svg>
              </div>
              <dl class="extremes">
                <dt>Max:</dt><dd>15.85</dd>
                <dt>Min:</dt><dd>-15.85</dd>
              </dl>
              <button class="details"><svg><use href="#search"/></svg></button>
            </div>
            <div class="panel-tabs">
              <button class="active"><svg><use href="#colors"/></svg></button>
              <button><svg><use href="#scales"/></svg></button>
              <button><svg><use href="#scope"/></svg></button>
            </div>
          </aside>
        </div>

        <!-- Result table -->
        <section class="results">
          <div class="pane-head">
            <h2>4.1 Průřezové charakteristiky</h2>
            <button><svg><use href="#pin"/></svg></button>
            <button><svg><use href="#close"/></svg></button>
          </div>
          <div class="toolbar table-tools">
            <button class="tool"><svg><use href="#tri"/></svg></button>
            <button class="tool"><svg><use href="#sort"/></svg></button>
            <button class="tool"><svg><use href="#down"/></svg></button>
            <button class="tool on"><svg><use href="#tablewedge"/></svg></button>
            <button class="tool"><svg><use href="#bracket"/></svg></button>
            <i class="sep"></i>
            <button class="tool"><svg><use href="#left"/></svg></button>
            <button class="tool"><svg><use href="#right"/></svg></button>
            <i class="sep"></i>
            <button class="tool on"><svg><use href="#turnr"/></svg></button>
            <button class="tool on"><svg><use href="#turnl"/></svg></button>
            <i class="sep"></i>
            <button class="tool"><svg><use href="#rows"/></svg></button>
            <i class="sep"></i>
            <button class="tool"><svg><use href="#filter"/></svg></button>
            <i class="sep"></i>
            <button class="tool pressed"><svg><use href="#chart"/></svg></button>
            <i class="sep"></i>
            <button class="tool"><svg><use href="#excel"/></svg></button>
            <i class="sep"></i>
          </div>
          <div class="grid-area">
            <table>
              <colgroup><col class="c-head"><col class="c-a"><col class="c-b"><col class="c-c"><col class="c-d"><col></colgroup>
              <thead>
                <tr class="letters"><th rowspan="2"></th><th class="selected">A</th><th>B</th><th>C</th><th>D</th><th>E</th></tr>
                <tr class="names"><th>Označení</th><th>Symbol</th><th>Hodnota</th><th>Jednotka</th><th>Komentář</th></tr>
              </thead>
              <tbody>
                <tr><th class="selected"></th><td>Průřezová plocha</td><td>A</td><td class="num">28.35</td><td>cm<sup>2</sup></td><td></td></tr>
                <tr><th></th><td></td><td>A<sub>geom</sub></td><td class="num">43.68</td><td>cm<sup>2</sup></td><td>geometrická plocha průřezu (nikoliv ideální)</td></tr>
                <tr><th></th><td>Smykové plochy</td><td>A<sub>y</sub></td><td class="num">11.29</td><td>cm<sup>2</sup></td><td></td></tr>
                <tr><th></th><td></td><td>A<sub>z</sub></td><td class="num">25.16</td><td>cm<sup>2</sup></td><td></td></tr>
                <tr><th></th><td>Poloha těžiště</td><td>y<sub>S,0</sub></td><td class="num">0.00</td><td>cm</td><td>vztaženo k nulovému bodu</td></tr>
              </tbody>
            </table>
            <div class="vscroll">
              <button aria-label="Nahoru"><svg viewBox="0 0 8 6"><path d="M1 5l3-3 3 3" fill="none" stroke="#444" stroke-width="1.5"/></svg></button>
              <div class="thumb"></div>
              <button aria-label="Dolů"><svg viewBox="0 0 8 6"><path d="M1 1l3 3 3-3" fill="none" stroke="#444" stroke-width="1.5"/></svg></button>
            </div>
          </div>
          <div class="sheet-tabs">
            <button class="active">Průřezové charakteristiky</button>
            <button>Statické momenty</button>
            <button>Výsečové statické momenty</button>
            <button>Plochy buněk</button>
            <button>Vlastnosti stěnového nosníku</button>
          </div>
        </section>
      </div>
    </main>

    <footer class="statusbar">
      <span class="hint">Pracovní rovina</span>
      <button>UCHOP</button>
      <button>RASTR</button>
      <button>KARTEZ</button>
      <button>OUCHOP</button>
      <button>VLINIE</button>
      <button>DXF</button>
      <span class="coords"><span class="cs">SS: Globální</span><span class="cy">Y: -106.9 mm</span><span class="cz">Z:&nbsp; 24.5 mm</span></span>
    </footer>
  </div>
</body>
</html>
```
FILE: styles.css
```css
* {
  margin: 0;
  padding: 0;
  box-sizing: border-box;
}
body {
  background: #000;
  padding: 0 18px 0 19px;
  font-family: Lato, "Noto Sans", sans-serif;
  font-size: 8px;
  line-height: 12px;
  color: #111;
}
button {
  font: inherit;
  color: inherit;
  background: none;
  border: none;
  display: flex;
  align-items: center;
  justify-content: center;
}
h1, h2 {
  font-size: 8px;
  font-weight: normal;
}
sub, sup {
  font-size: 7px;
  line-height: 0;
}
sub {
  vertical-align: -1px;
}
sup {
  vertical-align: 2px;
}
svg {
  display: block;
}
.sprite {
  display: none;
}
.app {
  display: flex;
  flex-direction: column;
  min-height: 100vh;
  background: #cfd4df;
}

/* Title and menu */
.titlebar {
  display: flex;
  align-items: center;
  height: 21px;
  padding-left: 5px;
  background: linear-gradient(90deg, #8c8a8c 57%, #3a96dd 57%, #3a96dd 61%, #e8e8e8 61%, #e8e8e8 80%, #8c8a8c 80%) top / 100% 1px no-repeat #fff;
}
.titlebar .logo {
  width: 11px;
  height: 11px;
  margin-right: 4px;
}
.titlebar h1 {
  flex: 1;
  color: #000;
}
.window-buttons {
  display: flex;
}
.window-buttons button {
  width: 31px;
}
.window-buttons svg {
  width: 8px;
  height: 8px;
}
.menubar {
  display: flex;
  align-items: center;
  height: 17px;
  padding-left: 6px;
}
.menu-logo {
  width: 12px;
  height: 9px;
  margin-right: 2px;
}
.menubar a {
  padding: 0 5px;
  color: #3a3f4a;
  text-decoration: none;
}
.mdi-buttons {
  display: flex;
  gap: 4px;
  margin-left: auto;
  padding: 3px 3px 0 0;
}
.mdi-buttons svg {
  width: 7px;
  height: 7px;
}

/* Toolbars */
.toolbar {
  display: flex;
  align-items: center;
  height: 17px;
  background: linear-gradient(#eef1f8, #d8deea);
}
.toolbar.short {
  margin-right: 77px;
  border-radius: 0 2px 2px 0;
}
.toolbar svg {
  width: 12px;
  height: 12px;
}
.tool {
  flex: none;
  width: 15px;
  height: 16px;
}
.tool.on {
  border: 1px solid #d8a850;
  background: linear-gradient(#fdeec8, #f8c068);
}
.tool.pressed {
  border: 1px solid #b0b8b8;
  background: #d2dbda;
}
.tool.value {
  flex-direction: column;
  font-size: 7px;
  line-height: 7px;
}
.tool.value svg {
  width: 12px;
  height: 6px;
}
.tool.wide {
  width: 18px;
}
.tool:disabled {
  opacity: 0.5;
}
.sep {
  flex: none;
  width: 1px;
  height: 11px;
  margin: 0 2px;
  background: #b4bbc8;
}
.grip {
  flex: none;
  width: 1px;
  height: 11px;
  margin: 0 4px 0 3px;
  border-left: 1px dotted #8d94a3;
}
.drop {
  flex: none;
  width: 9px;
  height: 14px;
}
.drop::after {
  content: "";
  border: 2px solid transparent;
  border-top-color: #555;
}
.combo {
  flex: none;
  width: 105px;
  height: 13px;
  appearance: none;
  border: 1px solid #b6bac2;
  border-radius: 0;
  background:
    linear-gradient(45deg, transparent 50%, #777 50%) right 5px center / 2px 2px no-repeat,
    linear-gradient(-45deg, transparent 50%, #777 50%) right 3px center / 2px 2px no-repeat,
    #efefef;
}
.combo.last {
  flex: 1;
  margin-left: 3px;
  background: #efefef;
}

/* Panes */
.workspace {
  flex: 1;
  display: flex;
  padding-top: 1px;
}
.pane-head {
  display: flex;
  align-items: center;
  gap: 5px;
  height: 13px;
  padding: 0 4px 0 2px;
  background: #bcc2cd;
}
.pane-head.light {
  background: #e4e9f3;
}
.pane-head h2 {
  flex: 1;
  color: #4a4f5a;
  white-space: nowrap;
}
.pane-head svg {
  width: 6px;
  height: 6px;
}
.navigator {
  width: 132px;
  margin-right: 3px;
  display: flex;
  flex-direction: column;
}
.tree-box {
  flex: 1;
  display: flex;
  flex-direction: column;
  margin-left: 1px;
  border: 1px solid #fff;
  background: #fcfcf3;
}
.tree {
  flex: 1;
}
.tree, .tree ul {
  list-style: none;
}
.tree {
  padding: 1px 0 0 4px;
}
.tree ul {
  padding-left: 13px;
}
.tree li {
  position: relative;
}
.tree ul .group {
  margin-top: 1px;
}
.tree label {
  display: flex;
  align-items: center;
  height: 12px;
  white-space: pre;
}
.tree label svg {
  width: 11px;
  height: 8px;
  margin: 0 3px 0 2px;
}
.tree sub {
  padding-top: 3px;
}
.tree ul ul label {
  padding-left: 12px;
}
.tree ul ul li::before {
  content: "";
  position: absolute;
  left: 3px;
  top: 0;
  width: 8px;
  height: 6px;
  border: dotted #999;
  border-width: 0 0 1px 1px;
}
.tree ul .group:not(:last-child)::before {
  content: "";
  position: absolute;
  left: 3px;
  top: 10px;
  bottom: -2px;
  border-left: 1px dotted #999;
}
.tree ul ul li::after {
  content: "";
  position: absolute;
  left: 3px;
  top: 0;
  height: 12px;
  border-left: 1px dotted #999;
}
.tree ul ul li:last-child::after {
  height: 6px;
}
.expander {
  width: 7px;
  height: 7px;
  margin-right: 5px;
  border: 1px solid #a9b2c4;
  background: linear-gradient(#46629a, #46629a) center / 3px 1px no-repeat #fff;
}
.tree input {
  appearance: none;
  width: 9px;
  height: 9px;
  border: 1px solid #555;
  background: #fff;
}
.tree input.mixed {
  background: #999;
  box-shadow: inset 0 0 0 1px #fff;
}
.tree input[type="radio"] {
  border-radius: 50%;
  border-color: #707a88;
}
.tree input:checked {
  background: radial-gradient(#111 35%, #fff 45%);
}
.hscroll {
  display: flex;
  height: 12px;
  background: #f0f0f0;
}
.hscroll button {
  width: 12px;
}
.hscroll svg {
  width: 5px;
  height: 7px;
}
.hscroll .track {
  flex: 1;
}
.hscroll .thumb {
  width: 64%;
  height: 100%;
  background: #cdcdcd;
}
.nav-tabs {
  display: flex;
  height: 17px;
  gap: 2px;
  padding: 1px 0 0 2px;
}
.nav-tabs button {
  width: 30px;
  height: 13px;
  gap: 1px;
  color: #444;
}
.nav-tabs svg {
  width: 11px;
  height: 11px;
}
.nav-tabs .active, .panel-tabs .active {
  background: #f6f7fa;
}

/* Drawing */
.right {
  flex: 1;
  min-width: 0;
  display: flex;
  flex-direction: column;
}
.upper {
  flex: 1;
  display: flex;
  gap: 3px;
}
.canvas {
  flex: 1;
  min-width: 0;
  min-height: 320px;
  margin-bottom: 4px;
  background: #fff;
  position: relative;
}
.canvas svg {
  position: absolute;
  width: 100%;
  height: 100%;
}
.canvas text {
  font-family: "Liberation Sans", Arial, sans-serif;
  font-size: 8px;
}
.canvas .note {
  font-family: Lato, sans-serif;
}
.canvas .green {
  fill: #00d000;
}
.canvas .blue {
  fill: #0000ff;
}
.canvas .pink {
  fill: #ff00e0;
  font-weight: bold;
}
.canvas .bold {
  font-weight: bold;
}

/* Colour panel */
.panel {
  width: 106px;
  display: flex;
  flex-direction: column;
}
.panel-body {
  flex: 1;
  display: flex;
  flex-direction: column;
  padding: 4px 3px 4px 4px;
  background: #f0f0f0;
  border-bottom: 1px solid #9aa0ac;
}
.panel-body p {
  height: 11px;
  line-height: 11px;
}
.scale {
  margin-top: 1px;
  border: solid #a0a0a0;
  border-width: 1px 0 0 1px;
  background: #faf6f0;
}
.scale-values text {
  font-size: 8px;
  text-anchor: end;
  fill: #222;
}
.extremes {
  display: grid;
  grid-template-columns: 45px 28px;
  margin-top: 7px;
  border: solid #c4c4ec;
  border-width: 0 1px 1px 0;
  background: #f8f8f8;
  text-align: right;
}
.extremes dt {
  padding-right: 4px;
}
.details {
  width: 17px;
  height: 14px;
  margin: auto 0 0 auto;
  border: 1px solid #b4b4b4;
  background: #e2e2e2;
}
.details svg {
  width: 12px;
  height: 12px;
}
.panel-tabs {
  display: flex;
  height: 19px;
  gap: 6px;
  padding-left: 2px;
}
.panel-tabs button {
  width: 15px;
  height: 13px;
}
.panel-tabs svg {
  width: 11px;
  height: 11px;
}

/* Result table */
.results {
  background: #f0f0f0;
}
.table-tools {
  height: 18px;
  padding-left: 5px;
  border-bottom: 1px solid #9a9a9a;
}
.grid-area {
  display: flex;
  padding: 1px 3px 13px 2px;
}
table {
  flex: 1;
  table-layout: fixed;
  border-collapse: collapse;
  background: #fff;
}
.c-head {
  width: 31px;
}
.c-a {
  width: 130px;
}
.c-b {
  width: 50px;
}
.c-c {
  width: 57px;
}
.c-d {
  width: 41px;
}
th, td {
  height: 11px;
  line-height: 10px;
  padding: 0 3px;
  border: 1px solid #a0a0a0;
  font-weight: normal;
  text-align: left;
  white-space: nowrap;
}
th {
  background: #e2e2e2;
  text-align: center;
}
.letters th {
  height: 10px;
  line-height: 9px;
}
.names th {
  height: 23px;
  padding: 0;
  vertical-align: bottom;
  background: #f0f0f0;
}
th.selected {
  background: #0078d7;
}
.letters .selected {
  color: #fff;
}
td.num {
  text-align: right;
}
.vscroll {
  width: 11px;
  margin-left: 1px;
  display: flex;
  flex-direction: column;
}
.vscroll button {
  height: 11px;
}
.vscroll button:last-child {
  margin-top: auto;
}
.vscroll svg {
  width: 7px;
  height: 5px;
}
.vscroll .thumb {
  height: 12px;
  background: #cdcdcd;
}
.sheet-tabs {
  display: flex;
  height: 24px;
  border-top: 1px solid #777;
}
.sheet-tabs button {
  height: 11px;
  padding: 0 3px;
  border: 1px solid #8a8a8a;
  border-top: none;
  border-radius: 0 0 2px 2px;
  background: #e4e4e4;
  white-space: nowrap;
}
.sheet-tabs .active {
  padding: 0 2px;
  background: #f8f8f8;
}

/* Status bar */
.statusbar {
  display: flex;
  align-items: center;
  height: 15px;
  padding-left: 3px;
  border-top: 1px solid #8b909b;
  border-bottom: 1px solid #777;
  background: linear-gradient(#c4c8d0, #a4a9b4 50%, #b8bcc6);
}
.statusbar .hint {
  width: 317px;
}
.statusbar button {
  height: 12px;
  padding: 0 1px;
  margin-right: 1px;
  border: 1px solid;
  border-color: #666 #d4d7dd #d4d7dd #666;
}
.coords {
  display: flex;
  margin-left: auto;
  white-space: nowrap;
}
.cs {
  width: 46px;
}
.cy {
  width: 51px;
  padding-left: 2px;
  border-left: 1px solid #8b909b;
}
.cz {
  width: 62px;
  padding-left: 2px;
  border-left: 1px solid #8b909b;
}
```
